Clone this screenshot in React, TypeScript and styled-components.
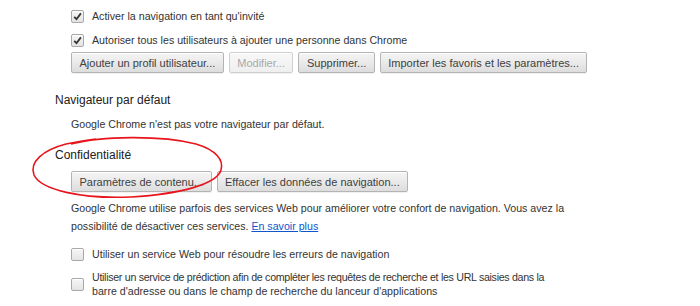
import styled, { createGlobalStyle } from "styled-components";

const GlobalStyle = createGlobalStyle`
  html, body {
    margin: 0;
    padding: 0;
    background: #ffffff;
  }
  body {
    font-family: "Liberation Sans", Arial, sans-serif;
    font-size: 10.65px;
    color: #333333;
  }
`;

const Page = styled.div`
  width: 700px;
  height: 306px;
  overflow: hidden;
  padding: 4px 0 0 55px;
  box-sizing: border-box;
`;

const Section = styled.section<{ $gap?: number }>`
  position: relative;
  margin-top: ${({ $gap }) => $gap ?? 0}px;
`;

const SectionTitle = styled.h3`
  margin: 0;
  font-size: 12px;
  font-weight: normal;
  line-height: 18px;
  color: #202020;
`;

const Indent = styled.div`
  padding-left: 16px;
`;

const CheckRow = styled.label<{ $lines?: number; $gap?: number }>`
  display: flex;
  align-items: center;
  gap: 8px;
  min-height: 24px;
  margin-top: ${({ $gap }) => $gap ?? 0}px;
  line-height: ${({ $lines }) => ($lines && $lines > 1 ? "14px" : "24px")};
`;

const LabelLine = styled.span<{ $tight?: boolean }>`
  display: block;
  white-space: nowrap;
  letter-spacing: ${({ $tight }) => ($tight ? "-0.3px" : "normal")};
`;

const Box = styled.span`
  flex: none;
  width: 11px;
  height: 11px;
  border: 1px solid #a8a8a8;
  border-radius: 2px;
  background: linear-gradient(#f6f6f6, #e4e4e4);
  box-shadow: inset 0 1px 0 #ffffff;
  display: flex;
  align-items: center;
  justify-content: center;
`;

const ButtonRow = styled.div<{ $gap?: number }>`
  display: flex;
  gap: 5px;
  margin-top: ${({ $gap }) => $gap ?? 0}px;
`;

const Button = styled.button`
  height: 21px;
  padding: 0 7.5px;
  font-family: "Liberation Sans", Arial, sans-serif;
  font-size: 11px;
  color: #404040;
  border: 1px solid #b4b4b4;
  border-radius: 2px;
  background: linear-gradient(#f4f4f4, #ececec 40%, #dddddd);
  box-shadow: 0 1px 0 rgba(0, 0, 0, 0.06), inset 0 1px 0 #ffffff;
  cursor: pointer;

  &:disabled {
    color: #a8a8a8;
    border-color: #d0d0d0;
    background: linear-gradient(#f8f8f8, #efefef);
    cursor: default;
  }
`;

const Text = styled.p<{ $gap?: number }>`
  margin: ${({ $gap }) => $gap ?? 0}px 0 0;
  line-height: 18px;
  white-space: nowrap;
`;

const Link = styled.a`
  color: #1155cc;
  text-decoration: underline;
`;

const Circle = styled.svg`
  position: absolute;
  left: -24px;
  top: -10px;
  pointer-events: none;
  overflow: visible;
`;

const Check = ({ checked }: { checked?: boolean }) => (
  <Box>
    {checked && (
      <svg width="9" height="9" viewBox="0 0 9 9">
        <path d="M1.2 4.8 L3.5 7.2 L7.9 1.4" fill="none" stroke="#333" strokeWidth="1.8" />
      </svg>
    )}
  </Box>
);

const App = () => {
  return (
    <>
      <GlobalStyle />
      <Page>
        <Indent>
          <CheckRow>
            <Check checked />
            <span>Activer la navigation en tant qu'invité</span>
          </CheckRow>
          <CheckRow>
            <Check checked />
            <span>Autoriser tous les utilisateurs à ajouter une personne dans Chrome</span>
          </CheckRow>
          <ButtonRow>
            <Button>Ajouter un profil utilisateur...</Button>
            <Button disabled>Modifier...</Button>
            <Button>Supprimer...</Button>
            <Button>Importer les favoris et les paramètres...</Button>
          </ButtonRow>
        </Indent>

        <Section $gap={18}>
          <SectionTitle>Navigateur par défaut</SectionTitle>
          <Indent>
            <Text $gap={6}>Google Chrome n'est pas votre navigateur par défaut.</Text>
          </Indent>
        </Section>

        <Section $gap={13}>
          <SectionTitle>Confidentialité</SectionTitle>
          <Indent>
            <ButtonRow $gap={7}>
              <Button>Paramètres de contenu...</Button>
              <Button>Effacer les données de navigation...</Button>
            </ButtonRow>
            <Text $gap={7}>
              Google Chrome utilise parfois des services Web pour améliorer votre confort de
              navigation. Vous avez la
              <br />
              possibilité de désactiver ces services. <Link href="#">En savoir plus</Link>
            </Text>
            <CheckRow $gap={7}>
              <Check />
              <span>Utiliser un service Web pour résoudre les erreurs de navigation</span>
            </CheckRow>
            <CheckRow $lines={2} $gap={4}>
              <Check />
              <span>
                <LabelLine $tight>
                  Utiliser un service de prédiction afin de compléter les requêtes de recherche et
                  les URL saisies dans la
                </LabelLine>
                <LabelLine>
                  barre d'adresse ou dans le champ de recherche du lanceur d'applications
                </LabelLine>
              </span>
            </CheckRow>
          </Indent>
          {/* annotation drawn over the section */}
          <Circle width="200" height="70" viewBox="0 0 200 70">
            <path
              d="M40 8 C70 0 130 -1 165 8 C185 14 193 24 190 34 C186 48 150 58 100 61 C50 63 10 54 3 39 C-2 26 12 14 35 8 C45 6 55 4 65 3"
              fill="none"
              stroke="#e8141b"
              strokeWidth="1.6"
            />
          </Circle>
        </Section>
      </Page>
    </>
  );
};

export default App;
